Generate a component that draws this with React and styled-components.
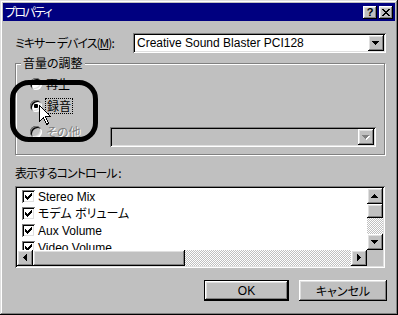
import React from "react";
import styled, { createGlobalStyle, css } from "styled-components";

const FACE = "#c0c0c0";
const JP = `"Noto Sans CJK JP", sans-serif`;
const LATIN = `"Liberation Sans", "Noto Sans CJK JP", sans-serif`;

const GlobalStyle = createGlobalStyle`
  html, body { margin: 0; padding: 0; background: ${FACE}; }
  body { font-family: ${LATIN}; font-size: 12px; color: #000; }
  * { box-sizing: border-box; }
`;

// ---- bevels ----
const raised = css`
  background: ${FACE};
  box-shadow: inset -1px -1px #000, inset 1px 1px #fff,
    inset -2px -2px #808080, inset 2px 2px #dfdfdf;
`;

const sunken = css`
  box-shadow: inset 1px 1px #808080, inset -1px -1px #fff,
    inset 2px 2px #000, inset -2px -2px #dfdfdf;
`;

const dither = css`
  background: repeating-conic-gradient(#fff 0 25%, ${FACE} 0 50%) 0 0 / 2px 2px;
`;

// ---- window ----
const Window = styled.div`
  position: relative;
  width: 398px;
  height: 315px;
  padding: 3px;
  background: ${FACE};
  box-shadow: inset -1px -1px #000, inset 1px 1px #dfdfdf,
    inset -2px -2px #808080, inset 2px 2px #fff;
  display: flex;
  flex-direction: column;
`;

const TitleBar = styled.div`
  height: 18px;
  background: #000080;
  color: #fff;
  display: flex;
  align-items: center;
  padding: 0 2px;
`;

const Title = styled.span`
  font-family: ${JP};
  font-feature-settings: "palt";
  font-size: 12px;
  line-height: 14px;
  letter-spacing: -1.5px;
`;

const CaptionButtons = styled.div`
  margin-left: auto;
  display: flex;
  gap: 2px;
`;

const CaptionButton = styled.div`
  ${raised}
  width: 14px;
  height: 13px;
  display: flex;
  align-items: center;
  justify-content: center;
  color: #000;
  font: bold 11px "Liberation Sans", sans-serif;
  line-height: 11px;
`;

const Body = styled.div`
  padding: 12px 9px 0 12px;
  display: flex;
  flex-direction: column;
`;

const Field = styled.div`
  display: flex;
  align-items: center;
  justify-content: space-between;
  height: 20px;
`;

const Label = styled.span`
  font-family: ${JP};
  font-feature-settings: "palt";
  line-height: 14px;
  letter-spacing: -1px;
  margin-top: ${(p) => p.$top || 0}px;
  u { text-decoration: underline; }
`;

// ---- combo ----
const Combo = styled.div`
  ${sunken}
  width: ${(p) => p.$w}px;
  height: 20px;
  margin-top: ${(p) => p.$top || 0}px;
  margin-left: auto;
  background: ${(p) => (p.$disabled ? FACE : "#fff")};
  display: flex;
  align-items: center;
  padding: 2px 2px 2px 4px;
`;

const ComboText = styled.span`
  flex: 1;
  font-family: ${LATIN};
  line-height: 14px;
`;

const DropButton = styled.div`
  ${raised}
  width: 16px;
  height: 16px;
  display: flex;
  align-items: center;
  justify-content: center;
`;

// ---- group box ----
const Group = styled.fieldset`
  margin: 3px 0 0 0;
  padding: 6px 8px 7px 5px;
  width: 370px;
  min-width: 0;
  border: 1px solid #808080;
  box-shadow: inset 1px 1px #fff, 1px 1px #fff;
`;

const Legend = styled.legend`
  padding: 0 2px;
  background: ${FACE};
  font-family: ${JP};
  font-feature-settings: "palt";
  line-height: 14px;
`;

const Options = styled.div`
  display: flex;
  flex-direction: column;
  padding-left: 9px;
`;

const OptionRow = styled.div`
  display: flex;
  align-items: flex-start;
  margin-top: ${(p) => p.$gap || 0}px;
`;

const Radio = styled.label`
  display: flex;
  align-items: center;
  gap: 4px;
  height: 16px;
  font-family: ${JP};
  font-feature-settings: "palt";
  line-height: 14px;
  color: ${(p) => (p.$disabled ? "#808080" : "#000")};
  text-shadow: ${(p) => (p.$disabled ? "1px 1px #fff" : "none")};
`;

const RadioDot = styled.span`
  position: relative;
  width: 12px;
  height: 12px;
  border-radius: 50%;
  background: ${(p) => (p.$disabled ? FACE : "#fff")};
  box-shadow: inset 1px 1px #808080, inset -1px -1px #fff,
    inset 2px 2px #000, inset -2px -2px #dfdfdf;
  &::after {
    content: "";
    display: ${(p) => (p.$checked ? "block" : "none")};
    position: absolute;
    left: 4px;
    top: 4px;
    width: 4px;
    height: 4px;
    border-radius: 1px;
    background: #000;
  }
`;

const Focus = styled.span`
  outline: 1px dotted #000;
  padding: 0 1px;
`;

// ---- list ----
const ListBox = styled.div`
  ${sunken}
  background: #fff;
  margin-top: 6px;
  width: 370px;
  height: 82px;
  padding: 2px;
  display: grid;
  grid-template-columns: 1fr 16px;
  grid-template-rows: 1fr 16px;
`;

const Items = styled.div`
  overflow: hidden;
  padding-left: 5px;
`;

const Item = styled.div`
  display: flex;
  align-items: center;
  gap: 3px;
  height: 17px;
  white-space: nowrap;
  font-family: ${LATIN};
  line-height: 14px;
`;

const ItemText = styled.span`
  font-feature-settings: "palt";
`;

const CheckBox = styled.span`
  ${sunken}
  width: 13px;
  height: 13px;
  background: #fff;
  display: flex;
  padding: 3px;
`;

const VScroll = styled.div`
  display: flex;
  flex-direction: column;
`;

const HScroll = styled.div`
  display: flex;
`;

const ScrollButton = styled.div`
  ${raised}
  width: 16px;
  height: 16px;
  flex: none;
  display: flex;
  align-items: center;
  justify-content: center;
`;

const Thumb = styled.div`
  ${raised}
  flex: none;
  width: ${(p) => p.$w || 16}px;
  height: ${(p) => p.$h || 16}px;
`;

const Track = styled.div`
  ${dither}
  flex: 1;
`;

const Corner = styled.div`
  background: ${FACE};
`;

// ---- buttons ----
const Buttons = styled.div`
  display: flex;
  justify-content: flex-end;
  gap: 10px;
  margin: 12px -1px 0 0;
`;

const Button = styled.div`
  ${raised}
  width: ${(p) => p.$w}px;
  height: 21px;
  display: flex;
  align-items: center;
  justify-content: center;
  font-family: ${(p) => (p.$jp ? JP : LATIN)};
  font-feature-settings: "palt";
  line-height: 14px;
  ${(p) =>
    p.$default &&
    css`
      box-shadow: inset 0 0 0 1px #000, inset -2px -2px #000,
        inset 2px 2px #fff, inset -3px -3px #808080, inset 3px 3px #dfdfdf;
    `}
`;

// ---- overlays ----
const Annotation = styled.div`
  position: absolute;
  left: 10px;
  top: 80px;
  width: 88px;
  height: 62px;
  border: 5px solid #000;
  border-radius: 19px;
  pointer-events: none;
`;

const Cursor = styled.svg`
  position: absolute;
  left: 39px;
  top: 105px;
`;

// ---- icons ----
const Tri = ({ dir = "down", color = "#000", shadow }) => {
  const pts = {
    down: "0,0 7,0 3.5,4",
    up: "0,4 7,4 3.5,0",
    left: "4,0 4,7 0,3.5",
    right: "0,0 0,7 4,3.5",
  }[dir];
  const vertical = dir === "up" || dir === "down";
  return (
    <svg
      width={vertical ? 8 : 5}
      height={vertical ? 5 : 8}
      viewBox={vertical ? "0 0 8 5" : "0 0 5 8"}
      style={{ display: "block", overflow: "visible" }}
      shapeRendering="crispEdges"
    >
      {shadow && <polygon points={pts} fill={shadow} transform="translate(1,1)" />}
      <polygon points={pts} fill={color} />
    </svg>
  );
};

const Check = () => (
  <svg width="7" height="7" viewBox="0 0 7 7" shapeRendering="crispEdges">
    <path
      fill="#000"
      d="M6 0h1v1h-1z M5 1h2v1h-2z M0 2h1v1h-1z M4 2h3v1h-3z M0 3h2v1h-2z M3 3h3v1h-3z M0 4h5v1h-5z M1 5h3v1h-3z M2 6h1v1h-1z"
    />
  </svg>
);

const CloseGlyph = () => (
  <svg width="8" height="7" viewBox="0 0 8 7" shapeRendering="crispEdges">
    <path
      fill="#000"
      d="M0 0h2v1h-2z M6 0h2v1h-2z M1 1h2v1h-2z M5 1h2v1h-2z M2 2h4v1h-4z M3 3h2v1h-2z M2 4h4v1h-4z M1 5h2v1h-2z M5 5h2v1h-2z M0 6h2v1h-2z M6 6h2v1h-2z"
    />
  </svg>
);

const controls = ["Stereo Mix", "モデム ボリューム", "Aux Volume", "Video Volume"];

export default function App() {
  return (
    <>
      <GlobalStyle />
      <Window>
        <TitleBar>
          <Title>プロパティ</Title>
          <CaptionButtons>
            <CaptionButton>?</CaptionButton>
            <CaptionButton>
              <CloseGlyph />
            </CaptionButton>
          </CaptionButtons>
        </TitleBar>

        <Body>
          <Field>
            <Label>
              ミキサー デバイス(<u>M</u>):
            </Label>
            <Combo $w={253}>
              <ComboText>Creative Sound Blaster PCI128</ComboText>
              <DropButton>
                <Tri dir="down" />
              </DropButton>
            </Combo>
          </Field>

          <Group>
            <Legend>音量の調整</Legend>
            <Options>
              <OptionRow>
                <Radio>
                  <RadioDot />
                  再生
                </Radio>
              </OptionRow>
              <OptionRow $gap={6}>
                <Radio>
                  <RadioDot $checked />
                  <Focus>録音</Focus>
                </Radio>
              </OptionRow>
              <OptionRow $gap={10}>
                <Radio $disabled>
                  <RadioDot $disabled />
                  その他
                </Radio>
                <Combo $w={266} $top={3} $disabled>
                  <ComboText />
                  <DropButton>
                    <Tri dir="down" color="#808080" shadow="#fff" />
                  </DropButton>
                </Combo>
              </OptionRow>
            </Options>
          </Group>

          <Label $top={11}>表示するコントロール :</Label>

          <ListBox>
            <Items>
              {controls.map((name) => (
                <Item key={name}>
                  <CheckBox>
                    <Check />
                  </CheckBox>
                  <ItemText>{name}</ItemText>
                </Item>
              ))}
            </Items>
            <VScroll>
              <ScrollButton>
                <Tri dir="up" />
              </ScrollButton>
              <Thumb $h={14} />
              <Track />
              <ScrollButton>
                <Tri dir="down" />
              </ScrollButton>
            </VScroll>
            <HScroll>
              <ScrollButton>
                <Tri dir="left" />
              </ScrollButton>
              <Thumb $w={152} />
              <Track />
              <ScrollButton>
                <Tri dir="right" />
              </ScrollButton>
            </HScroll>
            <Corner />
          </ListBox>

          <Buttons>
            <Button $w={85} $default>
              OK
            </Button>
            <Button $w={88} $jp>
              キャンセル
            </Button>
          </Buttons>
        </Body>

        <Annotation />
        <Cursor width="12" height="21" viewBox="0 0 12 21" shapeRendering="crispEdges">
          <path
            d="M0.5 0.5 V16.5 L4.5 12.5 L7.5 19.5 L9.5 18.5 L6.5 11.5 L11.5 11.5 Z"
            fill="#fff"
            stroke="#000"
            strokeWidth="1"
          />
        </Cursor>
      </Window>
    </>
  );
}
